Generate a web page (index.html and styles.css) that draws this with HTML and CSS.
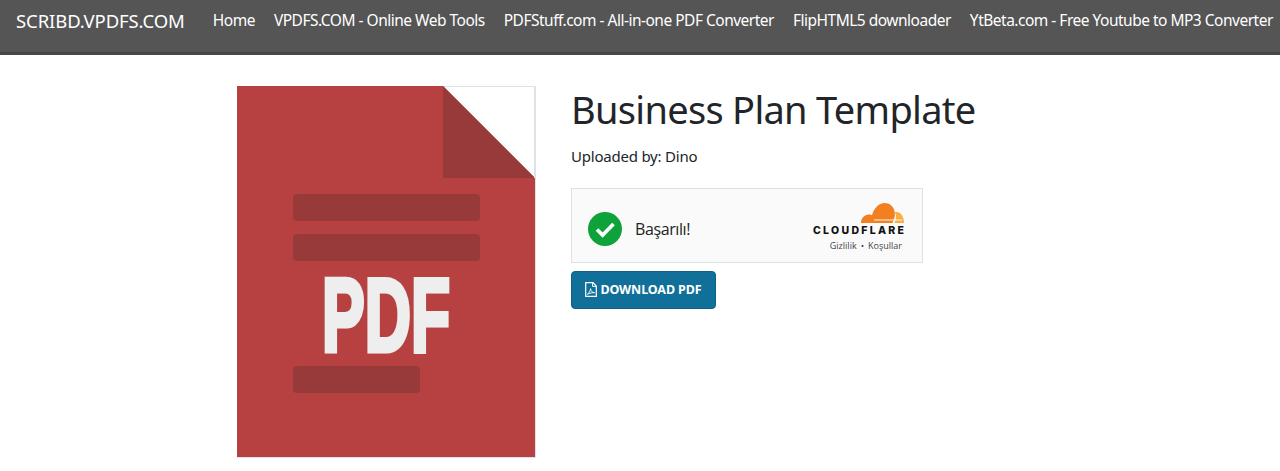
FILE: index.html
```html
<!DOCTYPE html>
<html lang="en">
<head>
<meta charset="utf-8">
<title>Business Plan Template</title>
<link rel="stylesheet" href="styles.css">
</head>
<body>
<nav class="navbar">
  <a class="brand" href="#">SCRIBD.VPDFS.COM</a>
  <ul class="nav-links">
    <li><a href="#">Home</a></li>
    <li><a href="#">VPDFS.COM - Online Web Tools</a></li>
    <li><a href="#">PDFStuff.com - All-in-one PDF Converter</a></li>
    <li><a href="#">FlipHTML5 downloader</a></li>
    <li><a href="#">YtBeta.com - Free Youtube to MP3 Converter</a></li>
  </ul>
</nav>
<main class="content">
  <div class="thumb">
    <svg class="thumb-art" viewBox="0 0 298 371" role="img" aria-label="PDF document">
      <path class="paper" d="M0 0H206L298 92V371H0Z"/>
      <path class="shade" d="M206 0L298 92H206Z"/>
      <path class="edge" d="M207 .5H297.5V92"/>
      <rect class="shade" x="56" y="108" width="187" height="27" rx="4"/>
      <rect class="shade" x="56" y="148" width="187" height="27" rx="4"/>
      <rect class="shade" x="56" y="280" width="127" height="27" rx="4"/>
      <text class="pdf-word" x="85" y="264.5" textLength="128" lengthAdjust="spacingAndGlyphs">PDF</text>
    </svg>
  </div>
  <section class="details">
    <h1 class="title">Business Plan Template</h1>
    <p class="uploader">Uploaded by: Dino</p>
    <div class="captcha">
      <div class="captcha-status">
        <svg class="check" viewBox="0 0 34 34" aria-hidden="true">
          <circle cx="17" cy="17" r="17" fill="#0ea33a"/>
          <path d="M9 17.5l5.6 5.6L25.5 12" fill="none" stroke="#fff" stroke-width="3.6"/>
        </svg>
        <span class="captcha-text">Başarılı!</span>
      </div>
      <div class="cf">
        <svg class="cf-cloud" viewBox="0 0 43 20" aria-hidden="true">
          <path fill="#f38020" d="M0 20C0 15.5 3 12 7.5 11.5C9 11.3 10 11.6 11 12.2C13 5 18 0 23.5 0C28.5 0 32.5 3.5 33.5 8C34.5 12 33.5 15 32.5 17.5L31.5 20Z"/>
          <path fill="#faae40" d="M33.5 20L34.5 17C35.3 14 35 11 33.8 9.2C34.5 9 35 9 35.5 9C39.8 9 43 13.5 43 20Z"/>
          <path d="M13 17H41" stroke="#fff" stroke-width=".9"/>
        </svg>
        <div class="cf-name">CLOUDFLARE</div>
        <div class="cf-links"><span>Gizlilik</span><span class="dot">•</span><span>Koşullar</span></div>
      </div>
    </div>
    <a class="download" href="#">
      <svg class="file-icon" viewBox="0 0 12 15" aria-hidden="true">
        <path d="M1 .7H8L11.3 4V14.3H.7V.7Z" fill="none" stroke="#fff" stroke-width="1.2"/>
        <path d="M7.6 .9V4.4H11" fill="none" stroke="#fff" stroke-width="1"/>
        <path d="M2.4 12.3C3.8 11.6 5.2 9 5.6 6.6C5.8 9 7.2 10.6 9.6 10.7C7.2 10.6 4.2 11.2 2.4 12.3Z" fill="none" stroke="#fff" stroke-width=".9"/>
      </svg>
      <span>DOWNLOAD PDF</span>
    </a>
  </section>
</main>
</body>
</html>
```
FILE: styles.css
```css
* { box-sizing: border-box; }
html, body { margin: 0; background: #fff; }
body { font-family: "Noto Sans", "Open Sans", sans-serif; color: #212529; overflow: hidden; height: 471px; }
a { text-decoration: none; color: inherit; }

.navbar {
  display: flex;
  align-items: flex-start;
  height: 55px;
  background: #555;
  border-bottom: 2px solid #484848;
  box-shadow: inset 0 -1px 0 #444;
  padding: 7px 0 0 16px;
  color: #fff;
  white-space: nowrap;
}
.brand { font-size: 18.5px; line-height: 27px; letter-spacing: -.1px; margin-right: 28px; }
.nav-links { display: flex; gap: 19px; list-style: none; margin: 0; padding: 0; }
.nav-links a { font-size: 15.5px; line-height: 26px; letter-spacing: -.5px; }

.content { display: flex; gap: 35px; width: 806px; margin: 31px auto 0; }
.thumb { flex: none; width: 299px; height: 372px; border-right: 1px solid #dee2e6; border-bottom: 1px solid #dee2e6; background: #fff; }
.thumb-art { display: block; width: 298px; height: 371px; }
.paper { fill: #b74141; }
.shade { fill: #983a3a; }
.edge { fill: none; stroke: #dee2e6; stroke-width: 1; }
.pdf-word { font-family: "Liberation Sans Narrow", "Liberation Sans", sans-serif; font-weight: 700; font-size: 103px; fill: #eee; stroke: #eee; stroke-width: 5; }

.details { flex: 1; min-width: 0; }
.title { margin: 0; font-size: 38px; font-weight: 400; line-height: 46px; letter-spacing: -.7px; white-space: nowrap; }
.uploader { margin: 12px 0 0; font-size: 15px; line-height: 24px; letter-spacing: -.22px; }
.captcha {
  display: flex;
  justify-content: space-between;
  align-items: stretch;
  width: 352px;
  height: 75px;
  margin-top: 20px;
  background: #fafafa;
  border: 1px solid #e0e0e0;
  padding: 0 18px 0 16px;
}
.captcha-status { display: flex; align-items: center; gap: 13px; padding-top: 6px; }
.check { width: 34px; height: 34px; }
.captcha-text { font-family: "Open Sans", sans-serif; font-size: 16px; letter-spacing: -.4px; color: #232323; }
.cf { display: flex; flex-direction: column; align-items: flex-end; padding-top: 14px; }
.cf-cloud { display: block; width: 43px; height: 20px; }
.cf-name { font-family: "Inter", sans-serif; font-weight: 800; font-size: 10.5px; line-height: 10px; letter-spacing: 2.3px; margin-right: -2.3px; margin-top: 3px; color: #111; }
.cf-links { display: flex; gap: 4px; font-family: "Open Sans", sans-serif; font-size: 9px; line-height: 12px; color: #444; margin-top: 4px; margin-right: 2px; }

.download {
  display: flex;
  align-items: center;
  justify-content: center;
  gap: 3px;
  width: 145px;
  height: 38px;
  margin-top: 8px;
  padding-bottom: 2px;
  background: #107099;
  border: 1px solid #0d6286;
  border-radius: 4px;
  color: #fff;
  font-size: 12.5px;
  font-weight: 700;
  letter-spacing: -.1px;
}
.file-icon { width: 12px; height: 15px; flex: none; }
```
